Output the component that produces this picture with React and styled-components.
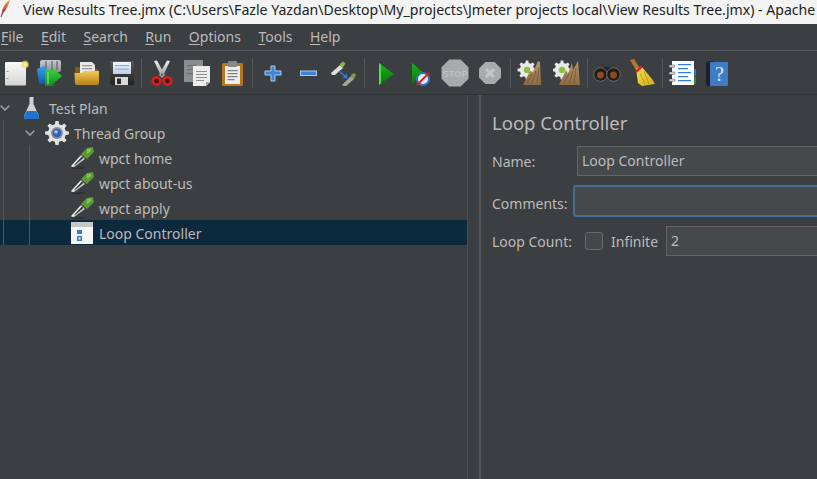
import React from 'react';
import styled, { createGlobalStyle } from 'styled-components';

const GlobalStyle = createGlobalStyle`
  html, body {
    margin: 0;
    padding: 0;
    height: 100%;
    overflow: hidden;
    background: #3c3f41;
  }
  #root { height: 100%; }
`;

// ---------- small helpers for the drawn icons ----------

const gearPath = (cx, cy, outer, inner, teeth) => {
  const pts = [];
  const step = (Math.PI * 2) / teeth;
  for (let i = 0; i < teeth; i++) {
    const a = i * step;
    [[-0.3, inner], [-0.17, outer], [0.17, outer], [0.3, inner]].forEach(([k, r]) => {
      const t = a + k * step;
      pts.push(`${(cx + Math.cos(t) * r).toFixed(2)} ${(cy + Math.sin(t) * r).toFixed(2)}`);
    });
  }
  return `M${pts.join('L')}Z`;
};

const Svg = ({ size = 26, children }) => (
  <svg width={size} height={size} viewBox={`0 0 ${size} ${size}`} style={{ flexShrink: 0, display: 'block' }}>
    {children}
  </svg>
);

const Grad = ({ id, from, to, x2 = 0, y2 = 1 }) => (
  <linearGradient id={id} x1="0" y1="0" x2={x2} y2={y2}>
    <stop offset="0" stopColor={from} />
    <stop offset="1" stopColor={to} />
  </linearGradient>
);

const Feather = () => (
  <svg width="12" height="18" viewBox="0 0 12 18" style={{ flexShrink: 0, display: 'block' }}>
    <defs><Grad id="fth" from="#f6a020" to="#7a2a90" /></defs>
    <path d="M10 0 C7 1 3 6 2 12 L0.5 17 L1.5 17 L3.5 12.5 C6 11 8.5 5 10 0Z" fill="url(#fth)" />
    <path d="M3 9 L5 9 L3.4 12.4 L2.2 12Z" fill="#d3243c" />
  </svg>
);

const NewIcon = () => (
  <Svg>
    <defs>
      <Grad id="newp" from="#fbfbfb" to="#d4d4d2" />
      <radialGradient id="news"><stop offset="0" stopColor="#fff8b0" /><stop offset="0.55" stopColor="#f0dc70" /><stop offset="1" stopColor="#f0dc70" stopOpacity="0" /></radialGradient>
    </defs>
    <rect x="2" y="2" width="21" height="23.5" rx="1" fill="url(#newp)" />
    <rect x="3.5" y="11" width="2" height="1" fill="#9a9a9a" />
    <rect x="3.5" y="18" width="2" height="1" fill="#9a9a9a" />
    <circle cx="22" cy="4.5" r="4.5" fill="url(#news)" />
  </Svg>
);

const TemplatesIcon = () => (
  <Svg>
    <defs>
      <Grad id="tgr" from="#3ed43e" to="#0f8f1f" />
      <Grad id="tbl" from="#39a0e8" to="#0f5fa8" />
      <Grad id="tgy" from="#c9cccf" to="#8c9094" />
    </defs>
    <rect x="3" y="0" width="21" height="12" rx="2" fill="url(#tgy)" />
    <path d="M9 1 V10 M15 1 V10 M20 1 V10" stroke="#5e6265" strokeWidth="1.2" />
    <path d="M0 9 L7 6 L10 8 L10 23 L2 24 Z" fill="url(#tbl)" />
    <path d="M8 10 L16 10 L16 8 L25 16 L16 24 L16 26 L8 26 Z" fill="url(#tgr)" />
    <rect x="10" y="12" width="2" height="12" fill="#7fe36f" opacity=".6" />
  </Svg>
);

const OpenIcon = () => (
  <Svg>
    <defs><Grad id="ofd" from="#f3c85a" to="#b78415" /></defs>
    <path d="M1 7 L8 7 L10 9 L24 9 L24 24 L1 24Z" fill="#7f5c10" />
    <path d="M6 2 L18 2 L21 5 L21 15 L6 15Z" fill="#e9e9e9" />
    <rect x="8" y="5" width="10" height="1.3" fill="#9d9d9d" />
    <rect x="8" y="8" width="10" height="1.3" fill="#9d9d9d" />
    <path d="M0.5 13 L8 13 L10 11 L25 11 L25 23 Q25 25 23 25 L3 25 Q1 25 1 23Z" fill="url(#ofd)" />
  </Svg>
);

const SaveIcon = () => (
  <Svg>
    <defs><Grad id="svb" from="#56595c" to="#1f2021" /><Grad id="svl" from="#f4f8fc" to="#bcd0e6" /></defs>
    <path d="M1 1 L25 1 L25 25 L3 25 L1 23Z" fill="url(#svb)" />
    <rect x="4" y="2" width="18" height="12" fill="url(#svl)" />
    <rect x="6" y="5" width="14" height="1.2" fill="#8fb0d0" />
    <rect x="6" y="8.5" width="14" height="1.2" fill="#8fb0d0" />
    <rect x="6" y="17" width="13" height="8" fill="#d9d9d9" />
    <rect x="8" y="18.5" width="4" height="5.5" fill="#2a2a2a" />
  </Svg>
);

const CutIcon = () => (
  <Svg>
    <defs><Grad id="cbl" from="#f2f2f2" to="#8f8f8f" /></defs>
    <path d="M5 1 L8 0.5 L16 15 L13 18Z" fill="url(#cbl)" />
    <path d="M21 1 L18 0.5 L10 15 L13 18Z" fill="url(#cbl)" />
    <circle cx="7.5" cy="21" r="3.7" fill="#4a1414" stroke="#d81f1f" strokeWidth="2.6" />
    <circle cx="18.5" cy="21" r="3.7" fill="#4a1414" stroke="#d81f1f" strokeWidth="2.6" />
    <circle cx="13" cy="14.5" r="1" fill="#444" />
  </Svg>
);

const CopyIcon = () => (
  <Svg>
    <rect x="0" y="0" width="19" height="22" fill="#8a8c8e" />
    <rect x="3" y="5" width="9" height="1.2" fill="#6c6e70" />
    <rect x="3" y="9" width="9" height="1.2" fill="#6c6e70" />
    <rect x="3" y="13" width="9" height="1.2" fill="#6c6e70" />
    <path d="M9 6 L26 6 L26 22 L22 26 L9 26Z" fill="#ededed" />
    <path d="M26 22 L22 22 L22 26Z" fill="#a8a8a8" />
    <rect x="12" y="11" width="11" height="1" fill="#8d8d8d" />
    <rect x="12" y="14" width="11" height="1" fill="#8d8d8d" />
    <rect x="12" y="17" width="11" height="1" fill="#8d8d8d" />
    <rect x="12" y="20" width="8" height="1" fill="#8d8d8d" />
  </Svg>
);

const PasteIcon = () => (
  <Svg>
    <rect x="3" y="3" width="21" height="23" rx="1.5" fill="#b8761f" />
    <rect x="6" y="6" width="15" height="18" fill="#ececec" />
    <rect x="9" y="1" width="9" height="6" rx="1" fill="#85888b" />
    <rect x="8.5" y="10" width="10" height="1.2" fill="#808080" />
    <rect x="8.5" y="13" width="10" height="1.2" fill="#808080" />
    <rect x="8.5" y="16" width="10" height="1.2" fill="#808080" />
    <rect x="8.5" y="19" width="7" height="1.2" fill="#808080" />
  </Svg>
);

const PlusIcon = () => (
  <Svg>
    <path d="M11 6 H15 V11 H21 V15 H15 V21 H11 V15 H5 V11 H11Z" fill="#3f83d6" stroke="#a9cbec" strokeWidth="1" />
  </Svg>
);

const MinusIcon = () => (
  <Svg>
    <rect x="5.5" y="11" width="16" height="4.5" fill="#3f83d6" stroke="#a9cbec" strokeWidth="1" />
  </Svg>
);

const ToggleIcon = () => (
  <Svg>
    <path d="M1 13 L10 5 L13 8 L5 15 L2 15Z" fill="#dcdcdc" />
    <path d="M10 4 L13 1.5 L15.5 3.5 L13 7.5 L11 7Z" fill="#8fb04a" />
    <path d="M12 25 L21 16 L24 19 L15 27Z" fill="#a4a89a" />
    <path d="M21 15 L24 13 L26 15 L24 19 L22 18Z" fill="#7f9b4b" />
    <path d="M9 11 L16 17" stroke="#2f7de0" strokeWidth="1.6" fill="none" />
    <path d="M17 13 L17.5 18.5 L12.5 18Z" fill="#2f7de0" />
  </Svg>
);

const PlayIcon = () => (
  <Svg>
    <defs><Grad id="pl" from="#16b816" to="#0b6f0b" /></defs>
    <path d="M5 3 L20 14 L5 25Z" fill="url(#pl)" />
    <path d="M5 3 L7 4.5 L7 23.5 L5 25Z" fill="#4fe04f" />
  </Svg>
);

const PlayNoTimerIcon = () => (
  <Svg>
    <defs><Grad id="pn" from="#16b816" to="#0b6f0b" /></defs>
    <path d="M5 3 L18 14 L5 24Z" fill="url(#pn)" />
    <circle cx="16" cy="19" r="6" fill="#e6eef8" stroke="#2f72c4" strokeWidth="2" />
    <path d="M10 25 L22 13" stroke="#d22222" strokeWidth="1.8" />
  </Svg>
);

const Octagon = ({ cx, cy, r }) => {
  const k = r * 0.42;
  return (
    <path
      d={`M${cx - k} ${cy - r} L${cx + k} ${cy - r} L${cx + r} ${cy - k} L${cx + r} ${cy + k} L${cx + k} ${cy + r} L${cx - k} ${cy + r} L${cx - r} ${cy + k} L${cx - r} ${cy - k}Z`}
      fill="#a9aaab"
    />
  );
};

const StopIcon = () => (
  <Svg size={28}>
    <Octagon cx={14} cy={14} r={13.5} />
    <text x="14" y="17.5" textAnchor="middle" fontFamily="Liberation Sans, sans-serif" fontWeight="700" fontSize="9.5" fill="#bfc0c1">STOP</text>
  </Svg>
);

const ShutdownIcon = () => (
  <Svg>
    <Octagon cx={13} cy={13} r={11} />
    <path d="M9 9 L17 17 M17 9 L9 17" stroke="#c6c7c8" strokeWidth="3" />
  </Svg>
);

const ClearIcon = ({ double }) => (
  <Svg size={28}>
    <defs><Grad id={double ? 'cb2' : 'cb1'} from="#b59468" to="#8c6b42" /></defs>
    <path d={gearPath(double ? 9 : 11, 11, 9.5, 7.2, 8)} fill="#e8e8e8" />
    <circle cx={double ? 9 : 11} cy="11" r="3.2" fill="#8fc23c" />
    <path d={double ? 'M6 26 L13 11 L15 15 L19 4 L20 11 L25 2 L27 26Z' : 'M7 26 L14 12 L17 13 L22 2 L24 3 L25 26Z'} fill={`url(#${double ? 'cb2' : 'cb1'})`} />
    <path d="M11 24 L16 15 M16 24 L20 12 M21 24 L23 9" stroke="#6d5230" strokeWidth=".8" />
  </Svg>
);

const FindIcon = () => (
  <Svg size={28}>
    <rect x="6" y="5" width="6" height="6" rx="1" fill="#3a3a3a" />
    <rect x="16" y="5" width="6" height="6" rx="1" fill="#3a3a3a" />
    <rect x="11" y="8" width="6" height="5" fill="#222" />
    <circle cx="7.5" cy="15.5" r="6.8" fill="#1d1d1d" stroke="#6c6c6c" strokeWidth="1" />
    <circle cx="20.5" cy="15.5" r="6.8" fill="#1d1d1d" stroke="#6c6c6c" strokeWidth="1" />
    <circle cx="7.5" cy="16" r="3.5" fill="#8d4a1c" />
    <circle cx="20.5" cy="16" r="3.5" fill="#8d4a1c" />
  </Svg>
);

const BroomIcon = () => (
  <Svg size={28}>
    <defs><Grad id="brm" from="#f6e45a" to="#d5a90f" x2={1} /></defs>
    <path d="M2 1 L6 0 L11 8 L8 11Z" fill="#b07a2a" />
    <path d="M8 10 L13 7 L24 20 L27 25 L14 27 L10 24Z" fill="url(#brm)" />
    <path d="M7 12 L13 6.5 L14.5 8.5 L8.5 14Z" fill="#d92020" />
    <path d="M12 14 L17 25 M16 12 L21 25" stroke="#b88d0d" strokeWidth=".8" />
  </Svg>
);

const ListIcon = () => (
  <Svg size={28}>
    <rect x="24" y="10" width="3" height="7" fill="#2f72c4" />
    <rect x="24" y="18" width="3" height="7" fill="#2b8f2b" />
    <rect x="3" y="2" width="22" height="24" fill="#fdfdfd" />
    {[6, 13, 20].map((y) => <rect key={y} x="0" y={y} width="6" height="2.4" rx="1" fill="#d8d8d8" stroke="#333" strokeWidth=".4" />)}
    {[5, 9, 13, 17, 21].map((y, i) => <rect key={y} x="9" y={y} width={i % 2 ? 10 : 13} height="1.2" fill="#2f7de0" />)}
  </Svg>
);

const HelpIcon = () => (
  <Svg>
    <path d="M1 3 L5 1 L8 1 L8 26 L3 26 Q1 26 1 24Z" fill="#1e2226" />
    <rect x="5" y="2" width="18" height="24" rx="1" fill="#3f7cc6" />
    <text x="14.5" y="21" textAnchor="middle" fontFamily="Liberation Serif, serif" fontSize="20" fill="#dfeaf6">?</text>
  </Svg>
);

const FlaskIcon = () => (
  <Svg size={24}>
    <path d="M9.5 1 L13.5 1 L13.5 8 L19 20 Q19.5 23 17 23 L6 23 Q3.5 23 4 20 L9.5 8Z" fill="#cfd2d4" />
    <path d="M6.8 15 L16.2 15 L19 20 Q19.5 23 17 23 L6 23 Q3.5 23 4 20Z" fill="#1f74d0" />
  </Svg>
);

const GearIcon = () => (
  <Svg size={24}>
    <path d={gearPath(12, 12, 12, 9, 8)} fill="#dfe1e3" />
    <circle cx="12" cy="12" r="6" fill="#8a8f96" />
    <circle cx="12" cy="12" r="4.3" fill="#2f63b8" />
    <circle cx="11" cy="11" r="1.8" fill="#a9c4ea" />
  </Svg>
);

const PipetteIcon = () => (
  <Svg size={24}>
    <path d="M1 22 L15 21 L13 23 L3 23Z" fill="#2c2e30" />
    <path d="M1 20 L11 9 L15 13 L4 21 L2 21Z" fill="#c9cccb" />
    <path d="M4 18 L12 10.5 L13.5 12 L5 19Z" fill="#3f4244" />
    <path d="M1.5 20 L10 10.5 L10.8 11.3 L2.6 20.4Z" fill="#f2f2f2" />
    <path d="M11 8 L17 2 L23 1 L24 6 L17 13Z" fill="#5c9a38" />
    <path d="M17 3 L21 2.5 L21 5 L17 8Z" fill="#86c256" />
  </Svg>
);

const LoopIcon = () => (
  <Svg size={24}>
    <rect x="1" y="1" width="22" height="22" fill="#f7f7f7" />
    <rect x="1" y="1" width="22" height="5" fill="#c4c7c9" />
    <rect x="7" y="9" width="5" height="4" fill="#2f7de0" />
    <rect x="7" y="15" width="5" height="5" fill="#2f7de0" />
    <rect x="8.5" y="16.5" width="2" height="2" fill="#f7f7f7" />
  </Svg>
);

const Chevron = () => (
  <svg width="10" height="6" viewBox="0 0 10 6" style={{ display: 'block' }}>
    <path d="M0.7 0.7 L5 5 L9.3 0.7" fill="none" stroke="#9da0a2" strokeWidth="1.6" />
  </svg>
);

// ---------- data ----------

const menus = ['File', 'Edit', 'Search', 'Run', 'Options', 'Tools', 'Help'];

const toolbar = [
  { gap: 3, icon: <NewIcon /> },
  { gap: 8, icon: <TemplatesIcon /> },
  { gap: 11, icon: <OpenIcon /> },
  { gap: 9, icon: <SaveIcon /> },
  { gap: 6, sep: true },
  { gap: 7, icon: <CutIcon /> },
  { gap: 9, icon: <CopyIcon /> },
  { gap: 9, icon: <PasteIcon /> },
  { gap: 7, sep: true },
  { gap: 7, icon: <PlusIcon /> },
  { gap: 9, icon: <MinusIcon /> },
  { gap: 9, icon: <ToggleIcon /> },
  { gap: 8, sep: true },
  { gap: 9, icon: <PlayIcon /> },
  { gap: 7, icon: <PlayNoTimerIcon /> },
  { gap: 9, icon: <StopIcon /> },
  { gap: 9, icon: <ShutdownIcon /> },
  { gap: 7, sep: true },
  { gap: 6, icon: <ClearIcon /> },
  { gap: 11, icon: <ClearIcon double /> },
  { gap: 7, sep: true },
  { gap: 6, icon: <FindIcon /> },
  { gap: 9, icon: <BroomIcon /> },
  { gap: 7, sep: true },
  { gap: 7, icon: <ListIcon /> },
  { gap: 9, icon: <HelpIcon /> },
];

const treeItems = [
  { label: 'Test Plan', depth: 0, open: true, icon: <FlaskIcon /> },
  { label: 'Thread Group', depth: 1, open: true, icon: <GearIcon /> },
  { label: 'wpct home', depth: 2, icon: <PipetteIcon /> },
  { label: 'wpct about-us', depth: 2, icon: <PipetteIcon /> },
  { label: 'wpct apply', depth: 2, icon: <PipetteIcon /> },
  { label: 'Loop Controller', depth: 2, selected: true, icon: <LoopIcon /> },
];

// ---------- styles ----------

const Window = styled.div`
  display: flex;
  flex-direction: column;
  width: 817px;
  height: 479px;
  overflow: hidden;
  background: #3c3f41;
  color: #bbbbbb;
  font-family: "Noto Sans", "Open Sans", sans-serif;
  font-size: 14px;
`;

const TitleBar = styled.div`
  display: flex;
  align-items: flex-start;
  flex: 0 0 24px;
  background: #f3f3f3;
  overflow: hidden;
  white-space: nowrap;
`;

const TitleText = styled.span`
  margin-left: 11px;
  color: #222222;
  font-size: 14.1px;
  line-height: 20px;
`;

const MenuBar = styled.div`
  display: flex;
  align-items: center;
  flex: 0 0 27px;
  padding-left: 1px;
  box-sizing: border-box;
  border-bottom: 1px solid #55585a;
`;

const MenuItem = styled.span`
  margin-right: 17.5px;
  line-height: 20px;
  u { text-underline-offset: 2px; text-decoration-thickness: 1px; }
`;

const ToolBar = styled.div`
  display: flex;
  align-items: center;
  flex: 0 0 44px;
  border-bottom: 1px solid #323537;
  box-sizing: border-box;
`;

const ToolButton = styled.div`
  display: flex;
  align-items: center;
  justify-content: center;
  flex: 0 0 26px;
  min-width: 0;
  height: 28px;
  margin-left: ${(p) => p.$gap}px;
`;

const ToolSeparator = styled.div`
  flex: 0 0 1px;
  height: 30px;
  margin-left: ${(p) => p.$gap}px;
  background: #55585a;
`;

const SplitPane = styled.div`
  display: flex;
  flex: 1;
  min-height: 0;
`;

const TreePane = styled.div`
  position: relative;
  flex: 0 0 467px;
  display: flex;
  flex-direction: column;
`;

const TreeGuide = styled.div`
  position: absolute;
  left: ${(p) => p.$left}px;
  top: ${(p) => p.$top}px;
  width: 1px;
  height: ${(p) => 150 - p.$top}px;
  background: #55585a;
`;

const TreeRow = styled.div`
  display: flex;
  align-items: center;
  flex: 0 0 25px;
  padding-left: ${(p) => p.$depth * 25}px;
  background: ${(p) => (p.$selected ? '#0d293e' : 'transparent')};
`;

const Toggle = styled.div`
  flex: 0 0 20px;
`;

const TreeLabel = styled.span`
  margin-left: 5px;
  padding-top: 1px;
  white-space: nowrap;
`;

const Divider = styled.div`
  flex: 0 0 11px;
  border-left: 1px solid #4a4d4f;
  border-right: 2px solid #55585a;
`;

const Details = styled.div`
  flex: 1;
  min-width: 0;
  display: flex;
  flex-direction: column;
  padding: 16px 0 0 11px;
`;

const Heading = styled.div`
  font-size: 18.5px;
  line-height: 24px;
  margin-bottom: 11px;
`;

const FormRow = styled.div`
  display: flex;
  align-items: center;
  margin-bottom: ${(p) => p.$mb}px;
`;

const FieldLabel = styled.label`
  flex: 0 0 ${(p) => p.$width}px;
  padding-top: ${(p) => p.$drop || 0}px;
  white-space: nowrap;
`;

const Field = styled.div`
  flex: 1;
  min-width: 0;
  box-sizing: border-box;
  height: ${(p) => (p.$focused ? 32 : 30)}px;
  padding-left: 4px;
  line-height: 28px;
  background: #45494a;
  border: ${(p) => (p.$focused ? '2px solid #466d94' : '1px solid #646464')};
  border-right: 0;
  border-radius: ${(p) => (p.$focused ? '3px 0 0 3px' : '0')};
`;

const CheckBox = styled.span`
  flex: 0 0 auto;
  box-sizing: border-box;
  width: 18px;
  height: 18px;
  background: #43494a;
  border: 1px solid #6b6b6b;
  border-radius: 3px;
`;

const CheckText = styled.span`
  margin: 0 8px 0 8px;
  white-space: nowrap;
`;

const App = () => (
  <>
    <GlobalStyle />
    <Window>
      <TitleBar>
        <Feather />
        <TitleText>
          View Results Tree.jmx (C:\Users\Fazle Yazdan\Desktop\My_projects\Jmeter projects local\View Results Tree.jmx) - Apache
        </TitleText>
      </TitleBar>
      <MenuBar>
        {menus.map((m) => (
          <MenuItem key={m}><u>{m[0]}</u>{m.slice(1)}</MenuItem>
        ))}
      </MenuBar>
      <ToolBar>
        {toolbar.map((item, i) =>
          item.sep
            ? <ToolSeparator key={i} $gap={item.gap} />
            : <ToolButton key={i} $gap={item.gap}>{item.icon}</ToolButton>
        )}
      </ToolBar>
      <SplitPane>
        <TreePane>
          {treeItems.map((item) => (
            <TreeRow key={item.label} $depth={item.depth} $selected={item.selected}>
              <Toggle>{item.open && <Chevron />}</Toggle>
              {item.icon}
              <TreeLabel>{item.label}</TreeLabel>
            </TreeRow>
          ))}
          <TreeGuide $left={3} $top={25} />
          <TreeGuide $left={29} $top={50} />
        </TreePane>
        <Divider />
        <Details>
          <Heading>Loop Controller</Heading>
          <FormRow $mb={9}>
            <FieldLabel $width={85}>Name:</FieldLabel>
            <Field>Loop Controller</Field>
          </FormRow>
          <FormRow $mb={9}>
            <FieldLabel $width={81} $drop={4}>Comments:</FieldLabel>
            <Field $focused />
          </FormRow>
          <FormRow $mb={0}>
            <FieldLabel $width={93}>Loop Count:</FieldLabel>
            <CheckBox />
            <CheckText>Infinite</CheckText>
            <Field>2</Field>
          </FormRow>
        </Details>
      </SplitPane>
    </Window>
  </>
);

export default App;
